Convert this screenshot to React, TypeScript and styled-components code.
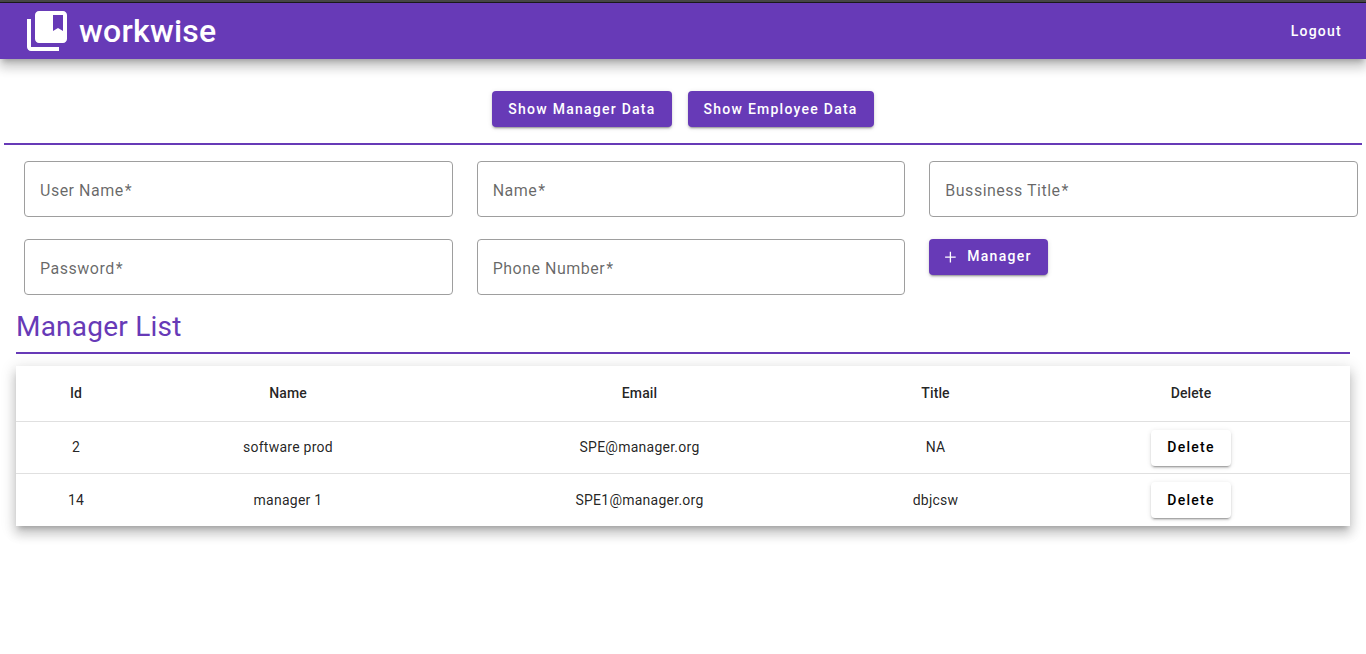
import React from "react";
import styled, { createGlobalStyle, css } from "styled-components";

const purple = "#673ab7";

const GlobalStyle = createGlobalStyle`
  * { box-sizing: border-box; }
  body {
    margin: 0;
    min-height: 100vh;
    background: #fff;
    color: rgba(0, 0, 0, 0.87);
    font-family: Roboto, "Helvetica Neue", sans-serif;
  }
`;

const raised = css`
  box-shadow: 0 5px 5px -3px rgba(0, 0, 0, 0.2), 0 8px 10px 1px rgba(0, 0, 0, 0.14),
    0 3px 14px 2px rgba(0, 0, 0, 0.12);
`;

const Page = styled.div`
  min-height: 100vh;
`;

const TopEdge = styled.div`
  height: 3px;
  background: #4a4a4a;
  border-bottom: 1px solid #1c1c1c;
`;

const Toolbar = styled.header`
  display: flex;
  align-items: center;
  justify-content: space-between;
  height: 56px;
  padding: 0 24px 0 23px;
  background: ${purple};
  color: #fff;
  ${raised}
`;

const Brand = styled.div`
  display: flex;
  align-items: center;
  gap: 8px;
  font-size: 32px;
  font-weight: 500;
  line-height: 48px;
  letter-spacing: 0.25px;
`;

const Logo = styled.svg`
  display: block;
  width: 48px;
  height: 48px;
  fill: currentColor;
`;

const Logout = styled.a`
  font-size: 14px;
  font-weight: 500;
  letter-spacing: 1.25px;
`;

const Button = styled.button`
  display: inline-flex;
  align-items: center;
  justify-content: center;
  height: 36px;
  padding: 0 16px;
  border: 0;
  border-radius: 4px;
  background: ${purple};
  color: #fff;
  font: 500 14px/36px Roboto, sans-serif;
  letter-spacing: 1.25px;
  white-space: nowrap;
  box-shadow: 0 3px 1px -2px rgba(0, 0, 0, 0.2), 0 2px 2px 0 rgba(0, 0, 0, 0.14),
    0 1px 5px 0 rgba(0, 0, 0, 0.12);
`;

const AddButton = styled(Button)`
  padding-bottom: 2px;
`;

const DeleteButton = styled(Button)`
  margin-top: 0.4px;
  padding-bottom: 0.4px;
  background: #fff;
  color: #000;
`;

const PlusIcon = styled.svg`
  width: 18px;
  height: 18px;
  margin: 2px 8px 0 -4px;
  fill: none;
  stroke: currentColor;
  stroke-width: 1.3;
`;

const Switcher = styled.nav`
  display: flex;
  justify-content: center;
  gap: 16px;
  margin: 0 4px;
  padding: 32px 0 16px;
  border-bottom: 2px solid ${purple};
`;

const Form = styled.form`
  display: grid;
  grid-template-columns: repeat(3, 1fr);
  gap: 22px 24px;
  align-items: start;
  padding: 16px 8px 0 24px;
`;

const Field = styled.label`
  display: flex;
  align-items: center;
  height: 56px;
  padding: 2px 15px 0;
  border: 1px solid #9e9e9e;
  border-radius: 4px;
  color: rgba(0, 0, 0, 0.6);
  font-size: 16px;
  letter-spacing: 0.5px;

  &::after {
    content: "*";
    margin-left: 1px;
  }
`;

const List = styled.section`
  padding: 15px 16px 0;
`;

const Heading = styled.h1`
  margin: 0 0 11.9px;
  height: 44px;
  border-bottom: 2px solid ${purple};
  color: ${purple};
  font-size: 28px;
  font-weight: 400;
  line-height: 34px;
  letter-spacing: 0.22px;
`;

const Table = styled.table`
  width: 100%;
  table-layout: fixed;
  border-collapse: separate;
  border-spacing: 0;
  background: #fff;
  font-size: 14px;
  line-height: 20px;
  text-align: center;
  ${raised}
`;

const HeadCell = styled.th`
  height: 56px;
  padding: 0;
  border-bottom: 1px solid rgba(0, 0, 0, 0.12);
  font-weight: 500;
  letter-spacing: 0.1px;
`;

const Cell = styled.td`
  height: 52px;
  padding: 0;
  letter-spacing: 0.25px;
  border-bottom: 1px solid rgba(0, 0, 0, 0.12);
  tr:last-child > & {
    border-bottom: 0;
  }
`;

const Column = styled.col<{ $width: number }>`
  width: ${(p) => p.$width}px;
`;

const columns = [
  { title: "Id", width: 120 },
  { title: "Name", width: 304 },
  { title: "Email", width: 399 },
  { title: "Title", width: 193 },
  { title: "Delete", width: 318 },
];

const managers = [
  { id: 2, name: "software prod", email: "SPE@manager.org", title: "NA" },
  { id: 14, name: "manager 1", email: "SPE1@manager.org", title: "dbjcsw" },
];

export default function App() {
  return (
    <Page>
      <GlobalStyle />
      <TopEdge />
      <Toolbar>
        <Brand>
          <Logo viewBox="0 0 24 24">
            <path d="M4 6H2v14c0 1.1.9 2 2 2h14v-2H4V6z" />
            <path d="M20 2H8c-1.1 0-2 .9-2 2v12c0 1.1.9 2 2 2h12c1.1 0 2-.9 2-2V4c0-1.1-.9-2-2-2zm0 10l-2.5-1.5L15 12V4h5v8z" />
          </Logo>
          <span>workwise</span>
        </Brand>
        <Logout>Logout</Logout>
      </Toolbar>
      <Switcher>
        <Button>Show Manager Data</Button>
        <Button>Show Employee Data</Button>
      </Switcher>
      <Form>
        <Field>User Name</Field>
        <Field>Name</Field>
        <Field>Bussiness Title</Field>
        <Field>Password</Field>
        <Field>Phone Number</Field>
        <div>
          <AddButton type="button">
            <PlusIcon viewBox="0 0 18 18">
              <path d="M9.4 3.8v10.6M4.1 9.1h10.6" />
            </PlusIcon>
            Manager
          </AddButton>
        </div>
      </Form>
      <List>
        <Heading>Manager List</Heading>
        <Table>
          <colgroup>
            {columns.map((c) => (
              <Column key={c.title} $width={c.width} />
            ))}
          </colgroup>
          <thead>
            <tr>
              {columns.map((c) => (
                <HeadCell key={c.title}>{c.title}</HeadCell>
              ))}
            </tr>
          </thead>
          <tbody>
            {managers.map((m) => (
              <tr key={m.id}>
                <Cell>{m.id}</Cell>
                <Cell>{m.name}</Cell>
                <Cell>{m.email}</Cell>
                <Cell>{m.title}</Cell>
                <Cell>
                  <DeleteButton>Delete</DeleteButton>
                </Cell>
              </tr>
            ))}
          </tbody>
        </Table>
      </List>
    </Page>
  );
}
